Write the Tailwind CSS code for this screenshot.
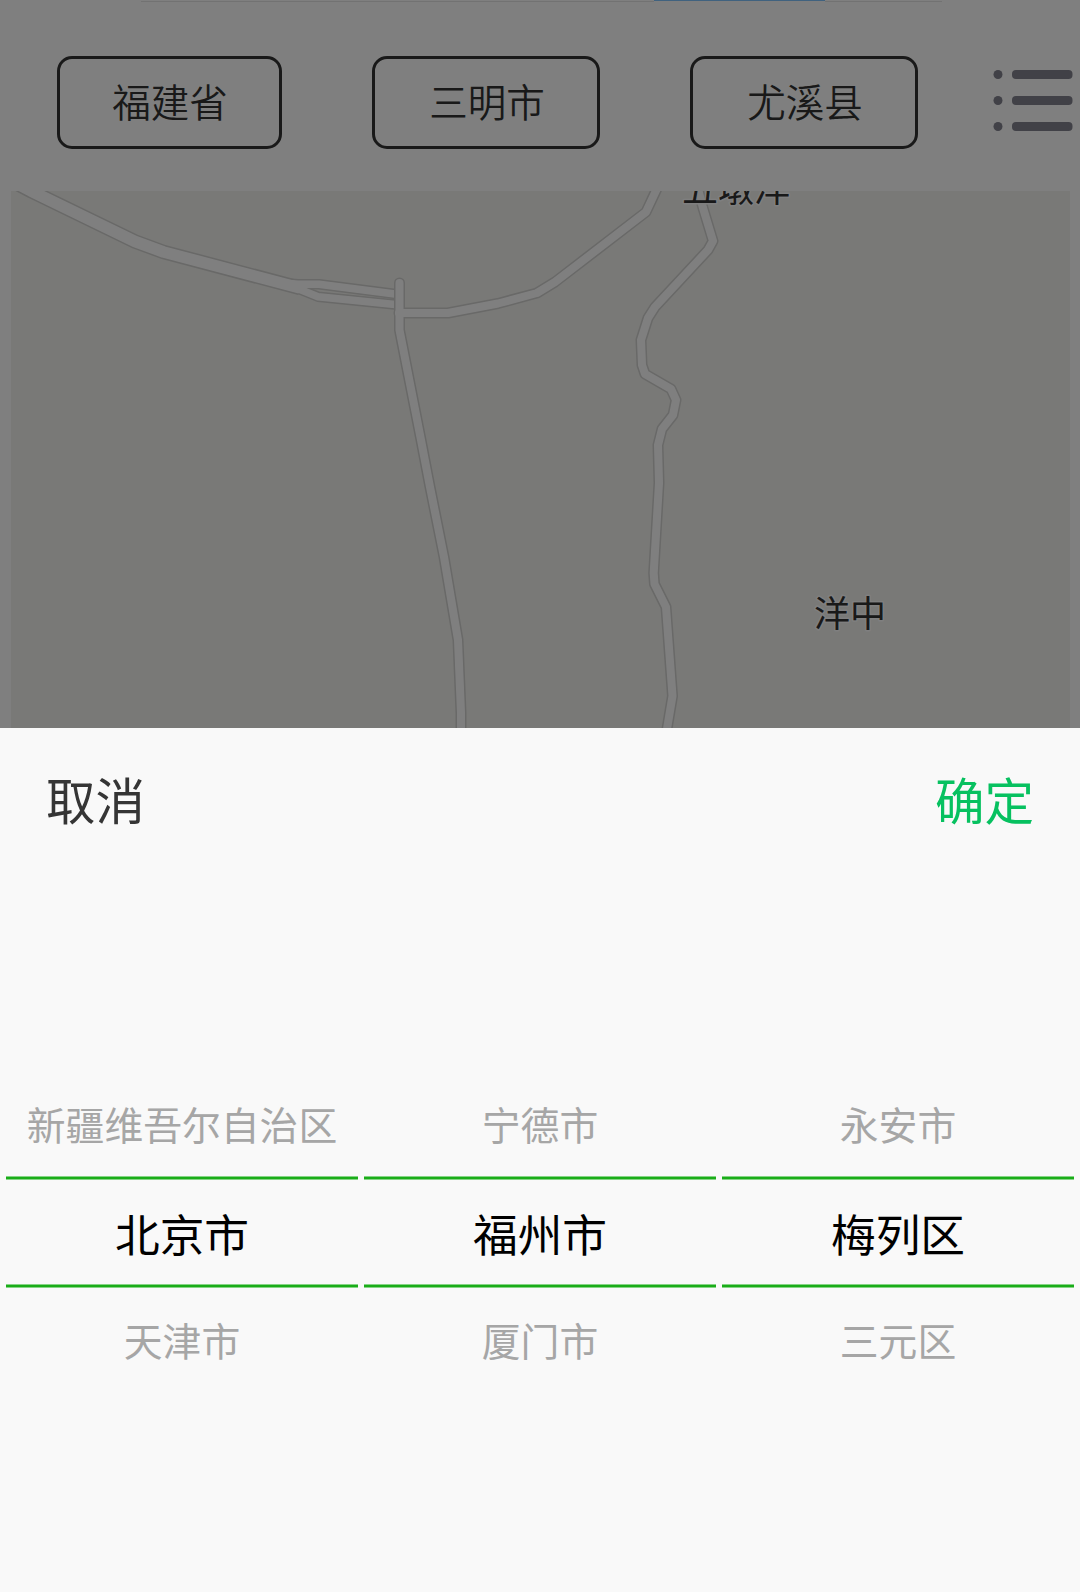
<!DOCTYPE html>
<html lang="zh-CN">
<head>
    <meta charset="UTF-8" />
    <meta name="viewport" content="width=device-width, initial-scale=1.0" />
    <title>选择地区</title>
    <script src="https://cdn.jsdelivr.net/npm/@tailwindcss/browser@4"></script>
</head>
<body class="font-['Noto_Sans_CJK_SC',sans-serif]">
    <div class="relative flex h-[1592px] w-[1080px] flex-col overflow-hidden bg-white">
        <!-- Tab line -->
        <div class="flex h-[2px] pl-[141px]">
            <div class="mt-px h-px w-[513px] bg-[#e4e4e4]"></div>
            <div class="h-px w-[171px] bg-[#80c4ff]"></div>
            <div class="mt-px h-px w-[117px] bg-[#e4e4e4]"></div>
        </div>

        <!-- Region buttons -->
        <div class="flex h-[189px] pt-[54px] pl-[57px]">
            <button class="h-[93px] w-[225px] rounded-[15px] border-3 border-[#333] pb-[4px] pl-[1px] text-[38.5px] font-[350] text-[#333]">福建省</button>
            <button class="ml-[90px] h-[93px] w-[228px] rounded-[15px] border-3 border-[#333] pb-[4px] pl-[2px] text-[38.5px] font-[350] text-[#333]">三明市</button>
            <button class="ml-[90px] h-[93px] w-[228px] rounded-[15px] border-3 border-[#333] pb-[4px] pl-[2px] text-[38.5px] font-[350] text-[#333]">尤溪县</button>
            <svg class="mt-[14px] ml-[75px] h-[61px] w-[80px]" viewBox="0 0 80 61" fill="#82828e">
                <circle cx="5" cy="4.5" r="4.5" />
                <circle cx="5" cy="30.5" r="4.5" />
                <circle cx="5" cy="56.5" r="4.5" />
                <rect x="19" y="0" width="60.5" height="9" rx="4" />
                <rect x="19" y="26" width="60.5" height="9" rx="4" />
                <rect x="19" y="52" width="60.5" height="9" rx="4" />
            </svg>
        </div>

        <!-- Map -->
        <div class="mx-auto h-[537px] w-[1059px] bg-[#f2f2ee]">
            <svg class="h-[537px] w-[1059px]" viewBox="11 191 1059 537" fill="none" stroke-linejoin="round">
                <defs>
                    <path id="trunk" d="M12 181L31 191L135 241.500L163.500 252L300 288" />
                    <path id="forkA" d="M280 283L298 284.300L319 284.300L395 294" />
                    <path id="forkB" d="M290 286L300 289.500L318 296.700L395 304.500" />
                    <path id="east" d="M399 313H448L498 303.500L537 293L555 282L646 212L661 180" />
                    <path id="south" d="M399.500 283V330L421 440L430 487L444 557L458 640L461 713V735" />
                    <path id="river" d="M697 185L703 208L713 241L708 250L655 307L648 318L641 340L642 365L645 374L671 389L676 400L673 415L662 429L658 445L659 483L653.700 573L654.500 584L666 607L672.500 696L666 735" />
                </defs>
                <g stroke="#d2d2d0">
                    <use href="#trunk" stroke-width="14.500" />
                    <use href="#forkA" stroke-width="10.500" />
                    <use href="#forkB" stroke-width="10.500" />
                </g>
                <g stroke="#fff">
                    <use href="#trunk" stroke-width="11.500" />
                    <use href="#forkA" stroke-width="7.500" />
                    <use href="#forkB" stroke-width="7.500" />
                </g>
                <g stroke="#d2d2d0" stroke-width="11" stroke-linecap="round">
                    <use href="#east" />
                    <use href="#south" />
                    <use href="#river" />
                </g>
                <g stroke="#fff" stroke-width="8" stroke-linecap="round">
                    <use href="#east" />
                    <use href="#south" />
                    <use href="#river" />
                </g>
                <g class="font-['Noto_Sans_CJK_SC',sans-serif] text-[36px]" fill="#333" stroke="#fff" stroke-width="3" paint-order="stroke">
                    <text x="682" y="202">五墩洋</text>
                    <text x="814" y="626.500">洋中</text>
                </g>
            </svg>
        </div>

        <!-- Mask -->
        <div class="absolute inset-0 bg-black/50"></div>

        <!-- Picker -->
        <div class="relative flex-1 bg-[#f9f9f9]">
            <div class="flex h-[143px] items-center justify-between px-[46px] text-[49.5px]">
                <button class="text-[#353535]">取消</button>
                <button class="text-[#07c160]">确定</button>
            </div>
            <div class="flex gap-[6px] px-[6px] pt-[199px] text-center text-[38.8px] text-[#a6a6a6]">
                <div class="w-[352px]">
                    <div class="h-[108px] leading-[106px] whitespace-nowrap">新疆维吾尔自治区</div>
                    <div class="-my-[2px] h-[4px] border-y border-[#86d486] bg-[#1aad19]"></div>
                    <div class="h-[108px] text-[44.7px] leading-[110px] text-black">北京市</div>
                    <div class="-my-[2px] h-[4px] border-y border-[#86d486] bg-[#1aad19]"></div>
                    <div class="h-[108px] leading-[106px]">天津市</div>
                </div>
                <div class="w-[352px]">
                    <div class="h-[108px] leading-[106px]">宁德市</div>
                    <div class="-my-[2px] h-[4px] border-y border-[#86d486] bg-[#1aad19]"></div>
                    <div class="h-[108px] text-[44.7px] leading-[110px] text-black">福州市</div>
                    <div class="-my-[2px] h-[4px] border-y border-[#86d486] bg-[#1aad19]"></div>
                    <div class="h-[108px] leading-[106px]">厦门市</div>
                </div>
                <div class="w-[352px]">
                    <div class="h-[108px] leading-[106px]">永安市</div>
                    <div class="-my-[2px] h-[4px] border-y border-[#86d486] bg-[#1aad19]"></div>
                    <div class="h-[108px] text-[44.7px] leading-[110px] text-black">梅列区</div>
                    <div class="-my-[2px] h-[4px] border-y border-[#86d486] bg-[#1aad19]"></div>
                    <div class="h-[108px] leading-[106px]">三元区</div>
                </div>
            </div>
        </div>
    </div>
</body>
</html>
